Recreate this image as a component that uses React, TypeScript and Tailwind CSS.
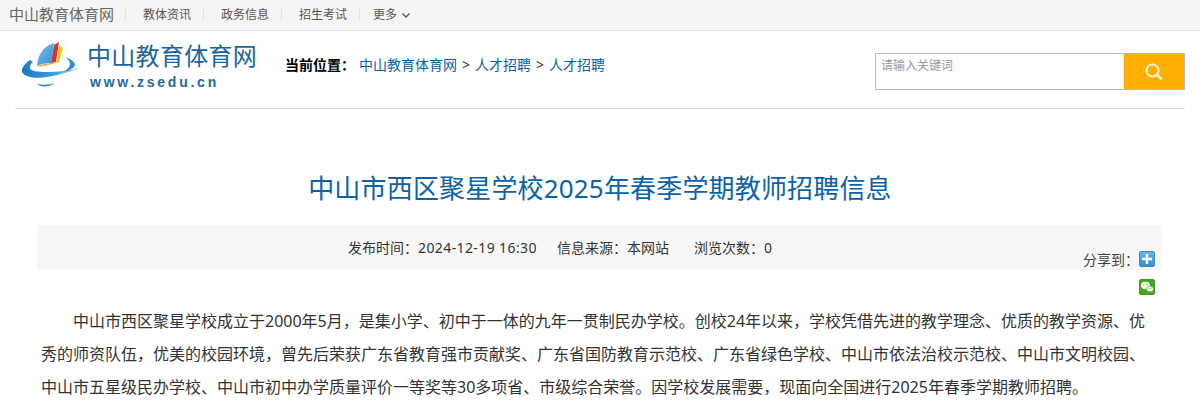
const navItems = ["教体资讯", "政务信息", "招生考试"]

const COLON = "\uFF1A"
const COMMA = "\uFF0C"

const intro = `中山市西区聚星学校成立于2000年5月${COMMA}是集小学、初中于一体的九年一贯制民办学校。创校24年以来${COMMA}学校凭借先进的教学理念、优质的教学资源、优秀的师资队伍${COMMA}优美的校园环境${COMMA}曾先后荣获广东省教育强市贡献奖、广东省国防教育示范校、广东省绿色学校、中山市依法治校示范校、中山市文明校园、中山市五星级民办学校、中山市初中办学质量评价一等奖等30多项省、市级综合荣誉。因学校发展需要${COMMA}现面向全国进行2025年春季学期教师招聘。`

function Logo() {
  return (
    <div className="flex items-start w-[240px] h-[52px]">
      <svg width="70" height="52" viewBox="0 0 70 52" className="shrink-0">
        <defs>
          <linearGradient id="swoosh" x1="0" y1="0" x2="1" y2="0">
            <stop offset="0" stopColor="#1a78c2" />
            <stop offset="0.55" stopColor="#3ea0dc" />
            <stop offset="1" stopColor="#d8edf9" />
          </linearGradient>
          <linearGradient id="page" x1="0" y1="0" x2="1" y2="1">
            <stop offset="0" stopColor="#7cc0ea" />
            <stop offset="1" stopColor="#2f8fd2" />
          </linearGradient>
        </defs>
        <path d="M19 27 C20 16 24 8 36 4 L33 24 C28 24 23 25 19 27 Z" fill="url(#page)" />
        <path d="M36 6 L41 3 L38 23 L33 24 Z" fill="#c8324a" />
        <path d="M41 6 L45 9 L41 23 L38 24 Z" fill="#f5c316" />
        <path d="M19 28 C24 25 31 24 41 23 L26 27 Z" fill="#e8a33a" />
        <path d="M12 21 C6 25 3 30 4 33 C6 38 18 40 29 38 C42 36 54 32 65 28 C53 31 41 33 29 33 C20 33 12 32 12 29 C12 26 13 24 15 23 Z" fill="url(#swoosh)" />
        <path d="M47 18 C53 20 57 23 57 26 C56 29 51 32 45 33 C50 30 52 28 52 25 C52 22 50 20 47 18 Z" fill="#2b8fd3" />
        <path d="M19 45 C25 46 31 46 37 44 C32 48 24 49 19 45 Z" fill="#2f8fd2" />
      </svg>
      <div className="flex flex-col ml-[-1px]">
        <span className="text-[24px] leading-[28px] text-[#19659c] whitespace-nowrap mt-[3px] w-[172px] tracking-[0.3px]">中山教育体育网</span>
        <span className="text-[14px] leading-[18px] font-semibold text-[#1f6a9e] tracking-[2.75px] mt-[3px] ml-[3px] [font-family:'Liberation_Sans',sans-serif] whitespace-nowrap">www.zsedu.cn</span>
      </div>
    </div>
  )
}

export default function App() {
  return (
    <div className="w-[1200px] h-[400px] overflow-hidden bg-white text-[#333] font-['Noto_Sans','Noto_Sans_CJK_SC',sans-serif]">
      <div className="h-[31px] bg-[#f5f5f5] border-b border-[#e3e3e3] flex items-center pl-[9px] pb-[1px]">
        <span className="text-[15px] text-[#666]">中山教育体育网</span>
        <span className="w-px h-[13px] bg-[#e2e2e2] ml-[11px]" />
        {navItems.map((item) => (
          <div key={item} className="flex items-center">
            <a className="text-[12px] text-[#555] ml-[17px]">{item}</a>
            <span className="w-px h-[13px] bg-[#e2e2e2] ml-[12px]" />
          </div>
        ))}
        <a className="text-[12px] text-[#555] ml-[13px]">更多</a>
        <svg width="10" height="10" viewBox="0 0 10 10" className="ml-[4px]" fill="none" stroke="#555" strokeWidth="1.4">
          <path d="M1.5 3.5 L5 7 L8.5 3.5" />
        </svg>
      </div>

      <div className="mx-[15px] h-[78px] border-b border-[#dcdcdc] flex items-start">
        <div className="ml-[3px] mt-[8px]"><Logo /></div>
        <div className="ml-[27px] mt-[22px] text-[14px] leading-[24px] flex whitespace-nowrap">
          <span className="font-bold text-black mr-[4px]">当前位置{COLON}</span>
          <span className="text-[#0a62a9]">中山教育体育网</span>
          <span className="mx-[5px] text-[#333]">&gt;</span>
          <span className="text-[#0a62a9]">人才招聘</span>
          <span className="mx-[5px] text-[#333]">&gt;</span>
          <span className="text-[#0a62a9]">人才招聘</span>
        </div>
        <div className="ml-auto mt-[22px] w-[310px] h-[37px] border border-[#bbb] flex">
          <span className="flex-1 pl-[5px] text-[12px] leading-[24px] text-[#999]">请输入关键词</span>
          <div className="w-[60px] h-full bg-[#ffad00] flex items-center justify-center">
            <svg width="20" height="20" viewBox="0 0 20 20" fill="none" stroke="#fff2cc" strokeWidth="2.2">
              <circle cx="8.5" cy="8.5" r="6" />
              <path d="M13 13 L18 17.5" strokeWidth="2.8" />
            </svg>
          </div>
        </div>
      </div>

      <h1 className="mt-[59px] text-center text-[26px] leading-[40px] font-normal tracking-[0.17px] text-[#0a62a9]">中山市西区聚星学校2025年春季学期教师招聘信息</h1>

      <div className="relative ml-[37px] mr-[38px] mt-[17px] h-[45px] bg-[#f7f7f7] flex items-center pl-[311px] text-[14px] pb-[1px]">
        <span>发布时间{COLON}<span className="tracking-[0.4px]">2024-12-19 16:30</span></span>
        <span className="ml-[20px]">信息来源{COLON}本网站</span>
        <span className="ml-[25px]">浏览次数{COLON}0</span>
        <div className="absolute left-[1046px] top-[25px] flex text-[14px] leading-[20px] text-[#444]">
          <span className="whitespace-nowrap">分享到{COLON}</span>
          <div className="flex flex-col gap-[12px] pt-[1px]">
            <div className="w-[16px] h-[16px] rounded-[2px] border border-[#3a86c8] bg-gradient-to-b from-[#6db3ea] to-[#3a8ad6] flex items-center justify-center">
              <svg width="12" height="12" viewBox="0 0 12 12"><path d="M6 1 V11 M1 6 H11" stroke="#fff" strokeWidth="2.4" /></svg>
            </div>
            <div className="w-[16px] h-[16px] rounded-[2px] border border-[#3f9a1c] bg-[#44a51f] flex items-center justify-center">
              <svg width="14" height="12" viewBox="0 0 14 12">
                <ellipse cx="5.5" cy="4.5" rx="4.5" ry="3.7" fill="#fff" />
                <ellipse cx="10" cy="8" rx="3.5" ry="2.9" fill="#fff" stroke="#44a51f" strokeWidth="0.7" />
                <circle cx="4" cy="3.6" r="0.7" fill="#44a51f" />
                <circle cx="7" cy="3.6" r="0.7" fill="#44a51f" />
                <circle cx="9" cy="7.5" r="0.5" fill="#44a51f" />
                <circle cx="11" cy="7.5" r="0.5" fill="#44a51f" />
              </svg>
            </div>
          </div>
        </div>
      </div>

      <div className="mx-[41px] w-[1110px] mt-[35px] text-[16px] leading-[33px] text-[#333]">
        <p className="indent-[32px]">{intro}</p>
      </div>
    </div>
  )
}
